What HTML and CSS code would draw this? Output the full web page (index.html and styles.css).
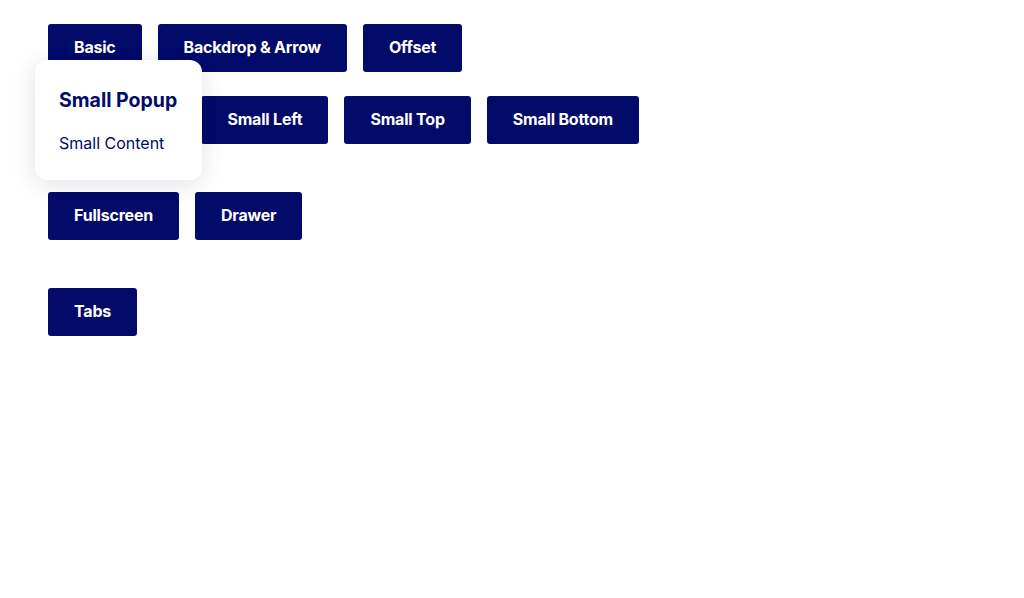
FILE: index.html
```html
<!DOCTYPE html>
<html>
<head>
<meta charset="utf-8">
<link rel="stylesheet" href="styles.css">
</head>
<body>
<main class="page">
  <div class="group">
    <div class="row">
      <button class="btn">Basic</button>
      <button class="btn">Backdrop &amp; Arrow</button>
      <button class="btn">Offset</button>
    </div>
    <div class="row">
      <button class="btn">Small Right</button>
      <button class="btn">Small Left</button>
      <button class="btn">Small Top</button>
      <button class="btn">Small Bottom</button>
    </div>
  </div>
  <div class="group">
    <div class="row">
      <button class="btn">Fullscreen</button>
      <button class="btn">Drawer</button>
    </div>
  </div>
  <div class="group">
    <div class="row">
      <button class="btn">Tabs</button>
    </div>
  </div>
</main>
<div class="popup">
  <div class="popup-title">Small Popup</div>
  <div class="popup-content">Small Content</div>
</div>
</body>
</html>
```
FILE: styles.css
```css
html, body {
  margin: 0;
  padding: 0;
  background: #ffffff;
}
body {
  font-family: Inter, "Noto Sans", sans-serif;
  position: relative;
}
.page {
  padding: 24px 48px;
  display: flex;
  flex-direction: column;
  gap: 48px;
}
.group {
  display: flex;
  flex-direction: column;
  gap: 24px;
}
.row {
  display: flex;
  gap: 16px;
}
.btn {
  height: 48px;
  padding: 0 26px 2px;
  border: none;
  border-radius: 3px;
  background: #020a6a;
  color: #ffffff;
  font-family: Inter, "Noto Sans", sans-serif;
  font-weight: 700;
  font-size: 16px;
  letter-spacing: -0.2px;
}
.popup {
  position: absolute;
  left: 35px;
  top: 60px;
  width: 167px;
  height: 120px;
  box-sizing: border-box;
  padding: 27px 24px;
  background: #ffffff;
  border-radius: 12px;
  box-shadow: 0 4px 24px rgba(10, 20, 60, 0.12);
  color: #020a6a;
}
.popup-title {
  font-size: 19.5px;
  font-weight: 700;
  letter-spacing: 0;
  line-height: 26px;
}
.popup-content {
  margin-top: 20px;
  font-size: 16px;
  font-weight: 400;
  line-height: 20px;
}
```
